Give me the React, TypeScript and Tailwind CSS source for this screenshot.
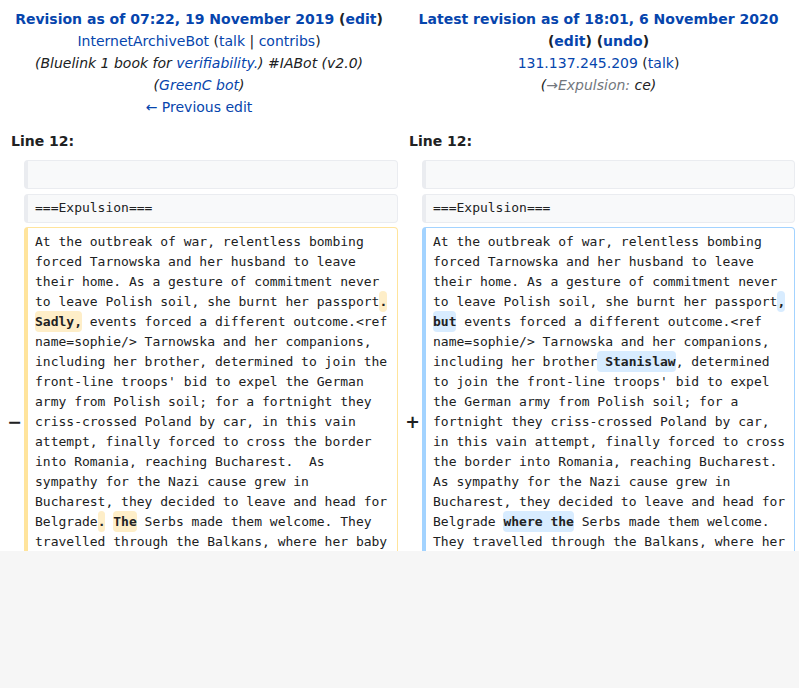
import React from "react";

const Del = ({ children }: { children: React.ReactNode }) => (
  <span className="bg-[#feeec8] font-bold rounded-[4px] py-[3px]">{children}</span>
);
const Ins = ({ children }: { children: React.ReactNode }) => (
  <span className="bg-[#d8ecff] font-bold rounded-[4px] py-[3px]">{children}</span>
);
const A = ({ children, className = "" }: { children: React.ReactNode; className?: string }) => (
  <span className={"text-[#0645ad] " + className}>{children}</span>
);

export default function App() {
  const mono = { fontFamily: '"DejaVu Sans Mono", monospace' };
  const ctxBox =
    "bg-[#f8f9fa] border border-[#eaecf0] border-l-4 rounded-[4px] px-[7px] py-[3.5px] text-[13px] leading-[20px] text-[#202122] whitespace-pre-wrap break-words";
  return (
    <div className="min-h-[688px] bg-[#f6f6f6]" style={{ fontFamily: '"DejaVu Sans", sans-serif' }}>
      <div className="h-[551px] overflow-hidden bg-white text-[#202122] text-[14px] leading-[22px]">
        {/* headers */}
        <div className="grid grid-cols-[398px_401px] pt-2 text-center">
          <div>
            <div className="font-bold">
              <A>Revision as of 07:22, 19 November 2019</A> (<A>edit</A>)
            </div>
            <div>
              <A>InternetArchiveBot</A> (<A>talk</A> | <A>contribs</A>)
            </div>
            <div className="italic">
              (Bluelink 1 book for <A>verifiability.</A>) #IABot (v2.0)
            </div>
            <div className="italic">
              (<A>GreenC bot</A>)
            </div>
            <div>
              <A>← Previous edit</A>
            </div>
          </div>
          <div>
            <div className="font-bold">
              <A>Latest revision as of 18:01, 6 November 2020</A>
            </div>
            <div className="font-bold">
              (<A>edit</A>) (<A>undo</A>)
            </div>
            <div>
              <A>131.137.245.209</A> (<A>talk</A>)
            </div>
            <div className="italic">
              (<span className="text-[#72777d]">→Expulsion:</span> ce)
            </div>
          </div>
        </div>

        {/* line numbers */}
        <div className="grid grid-cols-[398px_401px] mt-3 font-bold">
          <div className="pl-[11px]">Line 12:</div>
          <div className="pl-[11px]">Line 12:</div>
        </div>

        {/* diff rows */}
        <div
          className="grid grid-cols-[24px_374px_24px_373px] gap-y-[4.5px] mt-2"
          style={mono}
        >
          <div />
          <div className={ctxBox}>{"\u00a0"}</div>
          <div />
          <div className={ctxBox}>{"\u00a0"}</div>

          <div />
          <div className={ctxBox}>===Expulsion===</div>
          <div />
          <div className={ctxBox}>===Expulsion===</div>

          <div
            className="flex items-center justify-end pr-[2px] font-bold text-[17.5px] text-[#202122]"
            style={{ fontFamily: '"DejaVu Sans", sans-serif' }}
          >
            −
          </div>
          <div className="bg-white border border-[#ffe49c] border-l-4 rounded-[4px] px-[7px] py-[3.5px] text-[13px] leading-[20px] text-[#202122] whitespace-pre-wrap break-words">
            {"At the outbreak of war, relentless bombing forced Tarnowska and her husband to leave their home. As a gesture of commitment never to leave Polish soil, she burnt her passport"}
            <Del>.</Del>
            {" "}
            <Del>Sadly,</Del>
            {" events forced a different outcome.<ref name=sophie/> Tarnowska and her companions, including her brother, determined to join the front-line troops' bid to expel the German army from Polish soil; for a fortnight they criss-crossed Poland by car, in this vain attempt, finally forced to cross the border into Romania, reaching Bucharest.  As sympathy for the Nazi cause grew in Bucharest, they decided to leave and head for Belgrade"}
            <Del>.</Del>
            {" "}
            <Del>The</Del>
            {" Serbs made them welcome. They travelled through the Balkans, where her baby son became ill, and on through Turkey "}
            <Del>to</Del>
            {" Palestine and finally reached France, where they joined the Polish government in exile."}
          </div>

          <div
            className="flex items-center justify-end pr-[2px] font-bold text-[17.5px] text-[#202122]"
            style={{ fontFamily: '"DejaVu Sans", sans-serif' }}
          >
            +
          </div>
          <div className="bg-white border border-[#a3d3ff] border-l-4 rounded-[4px] px-[7px] py-[3.5px] text-[13px] leading-[20px] text-[#202122] whitespace-pre-wrap break-words">
            {"At the outbreak of war, relentless bombing forced Tarnowska and her husband to leave their home. As a gesture of commitment never to leave Polish soil, she burnt her passport"}
            <Ins>,</Ins>
            {" "}
            <Ins>but</Ins>
            {" events forced a different outcome.<ref name=sophie/> Tarnowska and her companions, including her brother"}
            <Ins> Stanislaw</Ins>
            {", determined to join the front-line troops' bid to expel the German army from Polish soil; for a fortnight they criss-crossed Poland by car, in this vain attempt, finally forced to cross the border into Romania, reaching Bucharest.  As sympathy for the Nazi cause grew in Bucharest, they decided to leave and head for Belgrade "}
            <Ins>where the</Ins>
            {" Serbs made them welcome. They travelled through the Balkans, where her baby son became ill, and on through Turkey"}
            <Ins>,</Ins>
            {" Palestine and finally reached France, where they joined the Polish government in exile."}
          </div>
        </div>
      </div>
    </div>
  );
}
